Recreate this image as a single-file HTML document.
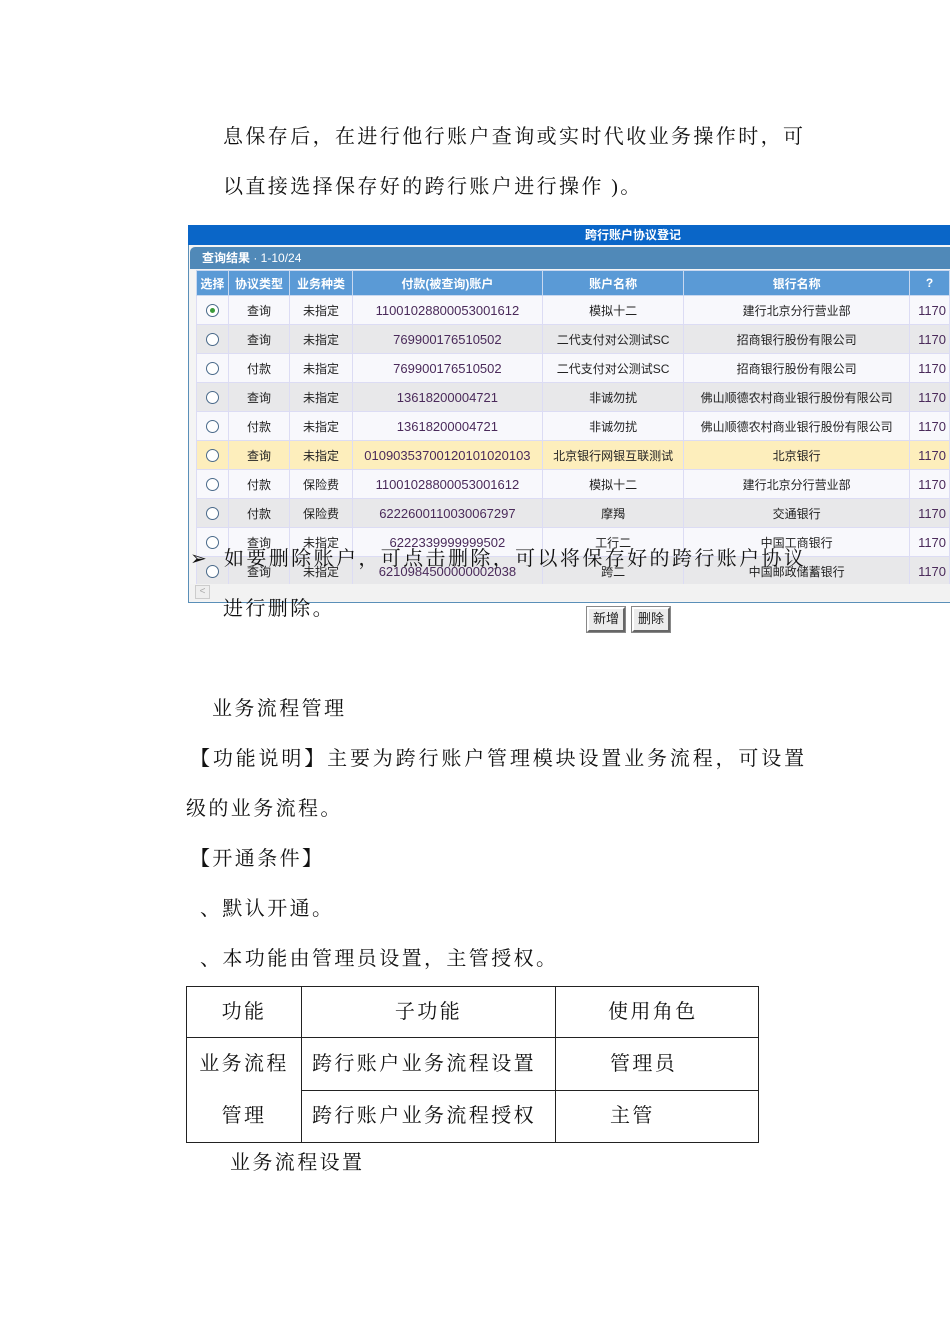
<!DOCTYPE html>
<html><head><meta charset="utf-8"><style>
*{margin:0;padding:0;box-sizing:border-box}
body{width:950px;height:1344px;background:#fff;position:relative;overflow:hidden;font-family:"Liberation Serif","Noto Serif CJK SC",serif;color:#111}
.t{position:absolute;font-size:20px;letter-spacing:2.4px;line-height:22px;white-space:nowrap}
.frame{position:absolute;left:188px;top:225px;width:770px;height:378px;border:1px solid #5a8fb8;background:#f4f4f4}
.title{position:absolute;left:188px;top:225px;width:762px;height:20px;background:#0a66c8;color:#fff;font:bold 12px "Liberation Sans","Noto Sans CJK SC",sans-serif;text-align:center;line-height:20px;padding-left:128px}
.sub{position:absolute;left:190px;top:247px;width:760px;height:22px;background:#5089b8;color:#fff;font:bold 12px "Liberation Sans","Noto Sans CJK SC",sans-serif;line-height:22px;padding-left:12px;border-radius:5px 0 0 0}
table.g{position:absolute;left:196px;top:270px;border-collapse:collapse;table-layout:fixed;font:12px "Liberation Sans","Noto Sans CJK SC",sans-serif;color:#222}
table.g td,table.g th{border:1px solid #dcdcf4;text-align:center;height:29px;white-space:nowrap;overflow:hidden;padding:0}
table.g th{background:#5a9ad6;color:#fff;font-weight:bold;height:25px;border-color:#c8d8f0}
table.g tr.w td{background:#f8f8fc}
table.g tr.k td{background:#e8e8ea}
table.g tr.y td{background:#fdeebc}
.n{color:#4a2a5a;font-size:13px}
.l{text-align:left!important;padding-left:8px!important}
.r{display:inline-block;width:13px;height:13px;border:1px solid #4a6a8a;border-radius:50%;background:#fff;vertical-align:middle;position:relative}
.r.on::after{content:"";position:absolute;left:3px;top:3px;width:5px;height:5px;border-radius:50%;background:#3a9a3a}
.scroll{position:absolute;left:190px;top:584px;width:760px;height:17px;background:#f2f2f2}
.scroll span{position:absolute;left:5px;top:1px;width:15px;height:14px;border:1px solid #ccc;background:#eee;font:10px sans-serif;color:#aaa;text-align:center;line-height:12px}
.btn{position:absolute;top:607px;height:25px;border:2px solid;border-color:#fff #666 #666 #fff;outline:1px solid #888;background:#ececec;font:13px "Liberation Sans","Noto Sans CJK SC",sans-serif;line-height:20px;padding:0 4px;color:#222}
.bt{position:absolute;left:186px;top:986px;border-collapse:collapse;font-size:20px;letter-spacing:2.4px}
.bt td{border:1px solid #222;height:51px;padding:0;line-height:22px}
</style></head><body>
<div class="t" style="left:223px;top:126px">息保存后，在进行他行账户查询或实时代收业务操作时，可</div>
<div class="t" style="left:223px;top:176px">以直接选择保存好的跨行账户进行操作 )。</div>

<div class="frame"></div>
<div class="title">跨行账户协议登记</div>
<div class="sub">查询结果 <span style="font-weight:normal">· 1-10/24</span></div>
<table class="g">
<colgroup><col style="width:32px"><col style="width:62px"><col style="width:63px"><col style="width:191px"><col style="width:142px"><col style="width:227px"><col style="width:40px"></colgroup>
<tr><th>选择</th><th>协议类型</th><th>业务种类</th><th>付款(被查询)账户</th><th>账户名称</th><th>银行名称</th><th>?</th></tr>
<tr class="w"><td><span class="r on"></span></td><td>查询</td><td>未指定</td><td class="n">11001028800053001612</td><td>模拟十二</td><td>建行北京分行营业部</td><td class="n l">1170</td></tr>
<tr class="k"><td><span class="r"></span></td><td>查询</td><td>未指定</td><td class="n">769900176510502</td><td>二代支付对公测试SC</td><td>招商银行股份有限公司</td><td class="n l">1170</td></tr>
<tr class="w"><td><span class="r"></span></td><td>付款</td><td>未指定</td><td class="n">769900176510502</td><td>二代支付对公测试SC</td><td>招商银行股份有限公司</td><td class="n l">1170</td></tr>
<tr class="k"><td><span class="r"></span></td><td>查询</td><td>未指定</td><td class="n">13618200004721</td><td>非诚勿扰</td><td>佛山顺德农村商业银行股份有限公司</td><td class="n l">1170</td></tr>
<tr class="w"><td><span class="r"></span></td><td>付款</td><td>未指定</td><td class="n">13618200004721</td><td>非诚勿扰</td><td>佛山顺德农村商业银行股份有限公司</td><td class="n l">1170</td></tr>
<tr class="y"><td><span class="r"></span></td><td>查询</td><td>未指定</td><td class="n">01090353700120101020103</td><td>北京银行网银互联测试</td><td>北京银行</td><td class="n l">1170</td></tr>
<tr class="w"><td><span class="r"></span></td><td>付款</td><td>保险费</td><td class="n">11001028800053001612</td><td>模拟十二</td><td>建行北京分行营业部</td><td class="n l">1170</td></tr>
<tr class="k"><td><span class="r"></span></td><td>付款</td><td>保险费</td><td class="n">6222600110030067297</td><td>摩羯</td><td>交通银行</td><td class="n l">1170</td></tr>
<tr class="w"><td><span class="r"></span></td><td>查询</td><td>未指定</td><td class="n">6222339999999502</td><td>工行二</td><td>中国工商银行</td><td class="n l">1170</td></tr>
<tr class="k"><td><span class="r"></span></td><td>查询</td><td>未指定</td><td class="n">6210984500000002038</td><td>跨二</td><td>中国邮政储蓄银行</td><td class="n l">1170</td></tr>
</table>
<div class="scroll"><span>&lt;</span></div>
<div class="btn" style="left:587px">新增</div>
<div class="btn" style="left:632px">删除</div>

<div class="t" style="left:190px;top:548px">➢&nbsp;&nbsp;如要删除账户，可点击删除，可以将保存好的跨行账户协议</div>
<div class="t" style="left:223px;top:598px">进行删除。</div>
<div class="t" style="left:212px;top:698px">业务流程管理</div>
<div class="t" style="left:190px;top:748px;letter-spacing:2.85px">【功能说明】主要为跨行账户管理模块设置业务流程，可设置</div>
<div class="t" style="left:186px;top:798px">级的业务流程。</div>
<div class="t" style="left:190px;top:848px">【开通条件】</div>
<div class="t" style="left:200px;top:898px">、默认开通。</div>
<div class="t" style="left:200px;top:948px">、本功能由管理员设置，主管授权。</div>

<table class="bt">
<tr><td style="width:115px;text-align:center">功能</td><td style="width:254px;text-align:center">子功能</td><td style="width:203px;padding-left:52px">使用角色</td></tr>
<tr><td rowspan="2" style="text-align:center;line-height:52px">业务流程<br>管理</td><td style="padding-left:10px">跨行账户业务流程设置</td><td style="padding-left:54px">管理员</td></tr>
<tr><td style="padding-left:10px">跨行账户业务流程授权</td><td style="padding-left:54px">主管</td></tr>
</table>
<div class="t" style="left:230px;top:1152px">业务流程设置</div>
</body></html>
